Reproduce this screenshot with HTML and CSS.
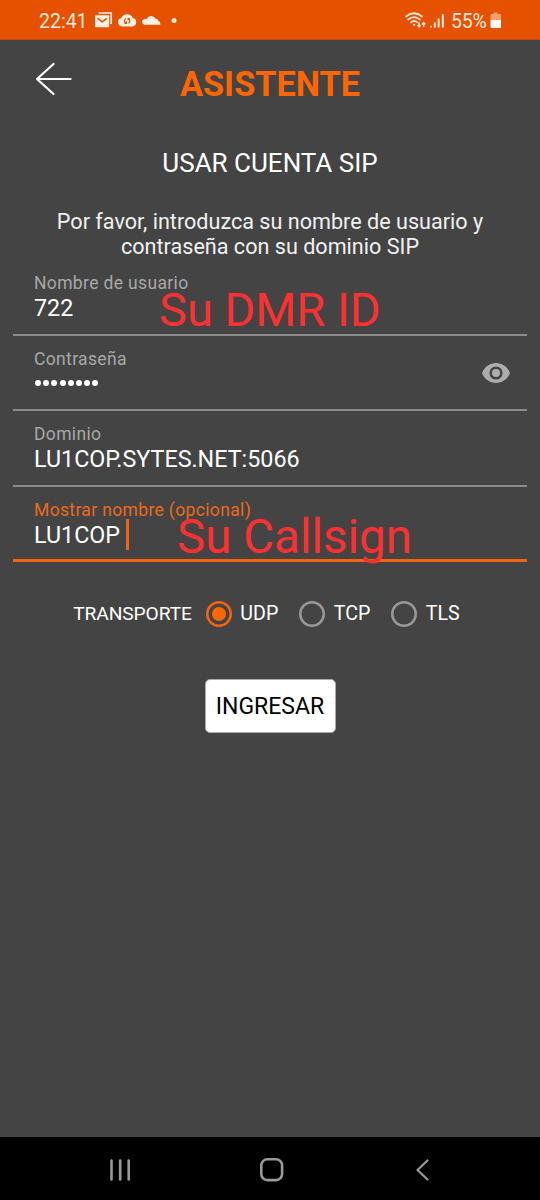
FILE: index.html
```html
<!DOCTYPE html>
<html lang="es">
<head>
<meta charset="utf-8">
<title>Asistente</title>
<link rel="stylesheet" href="styles.css">
</head>
<body>
<div class="phone">
  <header class="status">
    <span class="clock">22:41</span>
    <svg class="notices" width="86" height="20" viewBox="0 0 86 20" fill="#fff0e4">
      <path d="M4.500 3H17.200V14" fill="none" stroke="#fff0e4" stroke-width="1.700"/>
      <rect x="1" y="5.300" width="14.200" height="12" rx="1"/>
      <path d="M3.500 8.300l4.700 3.500L12.800 8.300" fill="none" stroke="#e65100" stroke-width="1.500"/>
      <path d="M28 16.400a4.200 4.200 0 0 1-.6-8.300a6.200 6.200 0 0 1 11.400 0a4.200 4.200 0 0 1-.4 8.300z"/>
      <path d="M31.800 8.600a2.700 2.700 0 0 0 0 4.600m2.800-4.600a2.700 2.700 0 0 1 0 4.600M30.400 13.300h1.900v-1.800M36 8.500h-1.900v1.800" fill="none" stroke="#e65100" stroke-width="1.200"/>
      <path d="M50.500 14.700a2.800 2.800 0 0 1-.4-5.500q1.300-.6 2.500-.2a5 5 0 0 1 9-.2q2.300-.1 2.800 2.200q1.900.2 2 3.700z"/>
      <circle cx="80" cy="10.500" r="2.500"/>
    </svg>
    <svg class="signals" width="42" height="20" viewBox="0 0 42 20" fill="none" stroke="#ffe9d8" stroke-width="1.700" stroke-linecap="round">
      <path d="M2 6.500q8-6.500 16 0M4.200 9.500q5.800-4.800 11.600 0M6.800 12.300q3.200-2.600 6.400 0"/>
      <circle cx="10" cy="14.800" r=".7" fill="#ffe9d8" stroke-width="1"/>
      <path d="M15 13v4m-1.300-1.400l1.300 1.400 1.300-1.400M19.600 16.500v-4m-1.300 1.400l1.300-1.400 1.300 1.400" stroke-width="1.500"/>
      <path d="M27 16.500v.3M30.800 13.300v3.500M34.600 9.300v7.500M38.800 5v11.800" stroke-width="2"/>
    </svg>
    <span class="percent">55%</span>
    <svg class="battery" width="12" height="18" viewBox="0 0 12 18">
      <path d="M3.500 1.500h4V3H10a1 1 0 0 1 1 1v5.500H.5V4a1 1 0 0 1 1-1h2z" fill="#f2a06e"/>
      <path d="M.5 9h10.500v7a1 1 0 0 1-1 1H1.500a1 1 0 0 1-1-1z" fill="#fff"/>
    </svg>
  </header>

  <div class="topbar">
    <svg class="back" width="38" height="34" viewBox="0 0 38 34" fill="none" stroke="#fff" stroke-width="2.200" stroke-linecap="round" stroke-linejoin="round">
      <path d="M18.500 2L2 17l16.500 15M2 17H35.500"/>
    </svg>
    <h1 class="title">ASISTENTE</h1>
  </div>

  <main class="content">
    <h2 class="heading">USAR CUENTA SIP</h2>
    <p class="intro">Por favor, introduzca su nombre de usuario y<br>contraseña con su dominio SIP</p>

    <form class="fields">
      <div class="field">
        <label class="label">Nombre de usuario</label>
        <div class="value">722</div>
        <span class="note note-id">Su DMR ID</span>
      </div>
      <div class="field field-password">
        <div>
          <label class="label">Contraseña</label>
          <div class="dots"><i></i><i></i><i></i><i></i><i></i><i></i><i></i><i></i></div>
        </div>
        <svg class="eye" width="30" height="22" viewBox="0 0 30 22">
          <path d="M1 11C3.500 4.700 9 1 15 1s11.500 3.700 14 10c-2.500 6.300-8 10-14 10S3.500 17.300 1 11z" fill="#adadad"/>
          <circle cx="15" cy="11" r="5.300" fill="#adadad" stroke="#444" stroke-width="2.600"/>
        </svg>
      </div>
      <div class="field">
        <label class="label">Dominio</label>
        <div class="value">LU1COP.SYTES.NET:5066</div>
      </div>
      <div class="field field-active">
        <label class="label">Mostrar nombre (opcional)</label>
        <div class="value">LU1COP<span class="caret"></span></div>
        <span class="note note-call">Su Callsign</span>
      </div>
    </form>

    <div class="transport">
      <span class="transport-label">TRANSPORTE</span>
      <span class="option"><i class="radio radio-on"></i>UDP</span>
      <span class="option"><i class="radio"></i>TCP</span>
      <span class="option"><i class="radio"></i>TLS</span>
    </div>

    <button class="submit" type="button">INGRESAR</button>
  </main>

  <nav class="navbar">
    <svg width="24" height="24" viewBox="0 0 24 24" stroke="#999" stroke-width="2.600" stroke-linecap="round"><path d="M3.500 2.500v19M12.200 2.500v19M20.700 2.500v19"/></svg>
    <svg width="24" height="24" viewBox="0 0 24 24" fill="none" stroke="#999" stroke-width="2.600"><rect x="1.300" y="1.300" width="20.800" height="20.800" rx="6"/></svg>
    <svg width="24" height="24" viewBox="0 0 24 24" fill="none" stroke="#999" stroke-width="2.300" stroke-linecap="round" stroke-linejoin="round"><path d="M16.500 2.500L6.500 12l10 9.500"/></svg>
  </nav>
</div>
</body>
</html>
```
FILE: styles.css
```css
* { box-sizing: border-box; }
body { margin: 0; font-family: Roboto, "Liberation Sans", sans-serif; color: #fff; }
h1, h2, p { margin: 0; font-weight: 400; }
svg { display: block; flex: none; }

.phone { width: 540px; height: 1200px; display: flex; flex-direction: column; background: #444; overflow: hidden; }

.status { height: 40px; flex: none; display: flex; align-items: center; padding: 1px 38px 0 39px; background: #e65100; color: #ffe9d8; font-size: 19.500px; border-bottom: 1px solid #c74c0b; }
.clock { width: 55px; padding-top: 2px; }
.signals { margin-left: auto; margin-right: 5px; }
.percent { width: 39px; padding-top: 2px; letter-spacing: -0.200px; }

.topbar { height: 88px; flex: none; display: grid; grid-template-columns: 90px 1fr 90px; padding-top: 22px; }
.back { margin-left: 35px; }
.title { text-align: center; font-size: 34.300px; line-height: 44px; font-weight: 700; color: #ff6600; }

.content { flex: 1; display: flex; flex-direction: column; align-items: center; padding-top: 19px; }
.heading { font-size: 26px; line-height: 32px; }
.intro { margin-top: 30px; text-align: center; font-size: 21.600px; line-height: 25.300px; color: #f1f1f1; }

.fields { width: 514px; margin-top: 0.600px; }
.field { position: relative; height: 75.500px; padding: 12px 21px 0; border-bottom: 2px solid #8b8b8b; }
.field-password { display: flex; justify-content: space-between; padding-right: 16px; }
.label { display: block; font-size: 17.500px; line-height: 22px; letter-spacing: 0.350px; color: #a8a8a8; }
.value { display: flex; align-items: center; height: 28px; font-size: 23.300px; line-height: 28px; }
.dots { display: flex; gap: 2.200px; padding: 10.500px 0 0 1px; }
.dots i { width: 6px; height: 6px; border-radius: 50%; background: #fff; }
.eye { margin-top: 14.500px; }
.field-active { border-bottom: 3px solid #f26411; }
.field-active .label { color: #ec6a1a; }
.caret { width: 3px; height: 31px; margin-left: 6px; background: #f26411; }
.note { position: absolute; font-size: 47px; line-height: 56px; color: #ff3030; white-space: nowrap; }
.note-id { left: 146px; top: 22px; }
.note-call { left: 164px; top: 22px; font-size: 47.500px; }

.transport { display: flex; align-items: center; margin-top: 36.500px; padding-right: 7px; font-size: 19.600px; height: 30px; }
.transport-label { margin-right: 14px; font-size: 19.200px; letter-spacing: -0.100px; }
.option { display: flex; align-items: center; margin-right: 21px; }
.option:last-child { margin-right: 0; }
.radio { display: grid; place-items: center; width: 26px; height: 26px; margin-right: 8.500px; border-radius: 50%; box-shadow: inset 0 0 0 2.500px #989898; }
.radio-on { box-shadow: inset 0 0 0 2.500px #f26411; }
.radio-on::after { content: ""; width: 14px; height: 14px; border-radius: 50%; background: #ff6600; }

.submit { width: 131px; height: 54px; margin-top: 50px; padding: 1px 0 0; border: 1px solid #aaa; border-radius: 5px; background: #fff; color: #000; font: 23px/51px Roboto, "Liberation Sans", sans-serif; }

.navbar { height: 63px; flex: none; display: flex; justify-content: space-between; align-items: center; padding: 3px 105px 0 108px; background: #000; }
```
